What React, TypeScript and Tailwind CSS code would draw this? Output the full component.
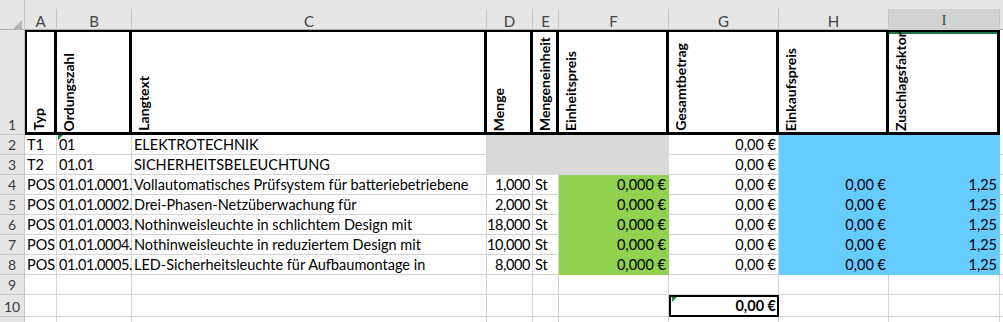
import clsx from 'clsx';

type Fill = 'gray' | 'green' | 'blue' | undefined;

interface DataRow {
  n: number;
  cells: string[];
  fills: Fill[];
}

const LETTERS = ['A', 'B', 'C', 'D', 'E', 'F', 'G', 'H', 'I'];
const RIGHT = [false, false, false, true, false, true, true, true, true];
const HEADERS = ['Typ', 'Ordungszahl', 'Langtext', 'Menge', 'Mengeneinheit', 'Einheitspreis', 'Gesamtbetrag', 'Einkaufspreis', 'Zuschlagsfaktor'];

const GRID = 'grid grid-cols-[25px_32px_75px_355px_46px_26px_110px_110px_110px_111px_3px]';

const T_FILLS: Fill[] = [undefined, undefined, undefined, 'gray', 'gray', 'gray', undefined, 'blue', 'blue'];
const P_FILLS: Fill[] = [undefined, undefined, undefined, undefined, undefined, 'green', undefined, 'blue', 'blue'];

const ROWS: DataRow[] = [
  { n: 2, cells: ['T1', '01', 'ELEKTROTECHNIK', '', '', '', '0,00 €', '', ''], fills: T_FILLS },
  { n: 3, cells: ['T2', '01.01', 'SICHERHEITSBELEUCHTUNG', '', '', '', '0,00 €', '', ''], fills: T_FILLS },
  { n: 4, cells: ['POS', '01.01.0001.', 'Vollautomatisches Prüfsystem für batteriebetriebene', '1,000', 'St', '0,000 €', '0,00 €', '0,00 €', '1,25'], fills: P_FILLS },
  { n: 5, cells: ['POS', '01.01.0002.', 'Drei-Phasen-Netzüberwachung für', '2,000', 'St', '0,000 €', '0,00 €', '0,00 €', '1,25'], fills: P_FILLS },
  { n: 6, cells: ['POS', '01.01.0003.', 'Nothinweisleuchte in schlichtem Design mit', '18,000', 'St', '0,000 €', '0,00 €', '0,00 €', '1,25'], fills: P_FILLS },
  { n: 7, cells: ['POS', '01.01.0004.', 'Nothinweisleuchte in reduziertem Design mit', '10,000', 'St', '0,000 €', '0,00 €', '0,00 €', '1,25'], fills: P_FILLS },
  { n: 8, cells: ['POS', '01.01.0005.', 'LED-Sicherheitsleuchte für Aufbaumontage in', '8,000', 'St', '0,000 €', '0,00 €', '0,00 €', '1,25'], fills: P_FILLS },
];

function fillClass(fill: Fill) {
  if (fill === 'gray') return 'bg-[#d9d9d9] border-[#d9d9d9]';
  if (fill === 'green') return 'bg-[#92d050] border-[#92d050]';
  if (fill === 'blue') return 'bg-[#66ccff] border-[#66ccff]';
  return 'bg-white border-[#d4d4d4]';
}

function ErrorMark() {
  return <div className="absolute left-[1px] top-0 h-0 w-0 border-t-[5px] border-r-[5px] border-t-[#1e8c3a] border-r-transparent" />;
}

function RowNum({ n, className }: { n: number | string; className?: string }) {
  return (
    <div className={clsx('flex items-end justify-center border-b border-r border-[#c6c6c6] bg-[#e6e6e6] text-[14px] leading-[18px] text-[#3c3c3c]', className)}>
      {n}
    </div>
  );
}

function Cell({ text, right, fill, mark, tight }: { text?: string; right?: boolean; fill?: Fill; mark?: boolean; tight?: boolean }) {
  return (
    <div
      className={clsx(
        'relative flex items-end whitespace-nowrap border-b border-r px-[2px] leading-[18px]',
        right && 'justify-end',
        tight && 'tracking-[-0.4px]',
        fillClass(fill),
      )}
    >
      {mark && <ErrorMark />}
      {text}
    </div>
  );
}

export default function App() {
  return (
    <div className="h-[322px] w-[1003px] overflow-hidden bg-white font-[Lato,'Liberation_Sans',sans-serif] text-[14.5px] text-black">
      {/* column letters */}
      <div className={clsx(GRID, 'h-[30px] border-b border-[#ababab] bg-[#e6e6e6]')}>
        <div className="flex items-end justify-end border-r border-[#c6c6c6] pb-[2px] pr-[2px]">
          <svg width="12" height="12" viewBox="0 0 12 12">
            <polygon points="0,12 12,12 12,0" fill="#b6b6b6" />
          </svg>
        </div>
        {LETTERS.map((l) =>
          l === 'I' ? (
            <div key={l} className="mt-[9px] flex items-center justify-center border-b-2 border-r border-b-[#217346] border-r-[#c6c6c6] bg-[#d2d2d2] font-['Liberation_Serif',serif] text-[15px] text-[#1f5c3a]">
              {l}
            </div>
          ) : (
            <div key={l} className="mt-[9px] flex items-center justify-center border-r border-[#c6c6c6] text-[15px] text-[#444]">
              {l}
            </div>
          ),
        )}
        <div />
      </div>

      {/* row 1: rotated headers */}
      <div className={clsx(GRID, 'h-[105px]')}>
        <RowNum n={1} />
        {HEADERS.map((h, i) => (
          <div
            key={h}
            className={clsx(
              'flex items-end border-b-[3px] border-r-[3px] border-t-2 border-black pb-[1px] pl-[3px]',
              i === 0 && 'border-l-2',
            )}
          >
            <span className="rotate-180 text-[14px] font-bold leading-[18px] [writing-mode:vertical-rl]">{h}</span>
          </div>
        ))}
        <div />
      </div>

      {/* rows 2-8 */}
      {ROWS.map((r) => (
        <div key={r.n} className={clsx(GRID, 'h-[20px]')}>
          <RowNum n={r.n} />
          {r.cells.map((c, i) => (
            <Cell key={i} text={c} right={RIGHT[i]} fill={r.fills[i]} mark={r.n === 2 && i === 1} tight={i === 1 || i === 3} />
          ))}
          <div className="border-b border-[#d4d4d4]" />
        </div>
      ))}

      {/* row 9 */}
      <div className={clsx(GRID, 'h-[20px]')}>
        <RowNum n={9} />
        {LETTERS.map((l) => (
          <Cell key={l} />
        ))}
        <div className="border-b border-[#d4d4d4]" />
      </div>

      {/* row 10 */}
      <div className={clsx(GRID, 'h-[22px]')}>
        <RowNum n={10} />
        {LETTERS.map((l, i) =>
          i === 6 ? (
            <div key={l} className="relative flex items-end justify-end border-2 border-black bg-white px-[1px] font-bold leading-[18px]">
              <ErrorMark />
              0,00 €
            </div>
          ) : (
            <Cell key={l} />
          ),
        )}
        <div className="border-b border-[#d4d4d4]" />
      </div>

      {/* row 11 (cut off) */}
      <div className={clsx(GRID, 'h-[20px]')}>
        <RowNum n="" />
        {LETTERS.map((l) => (
          <Cell key={l} />
        ))}
        <div />
      </div>
    </div>
  );
}
